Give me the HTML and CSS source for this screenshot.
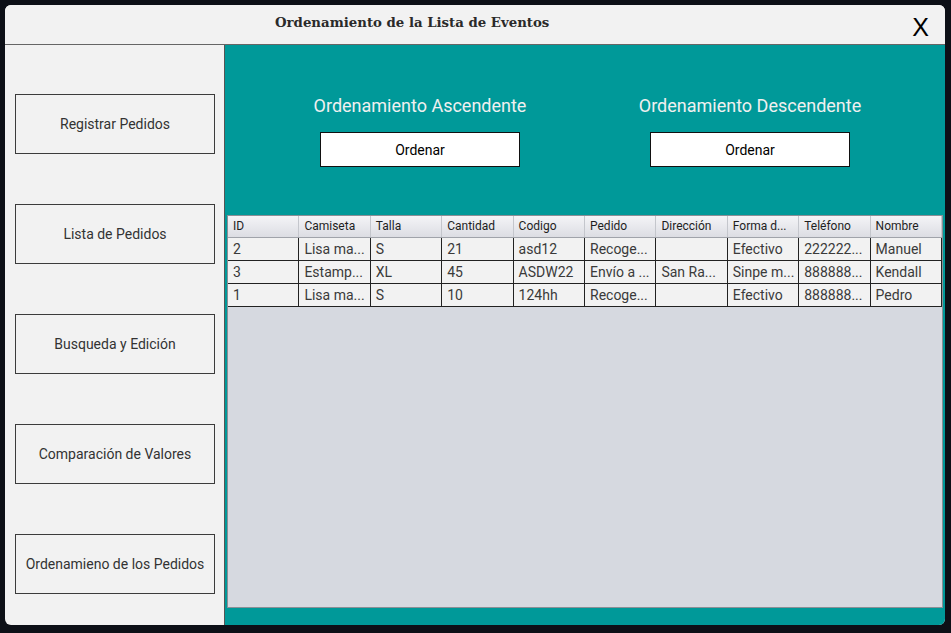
FILE: index.html
```html
<!DOCTYPE html>
<html lang="es">
<head>
<meta charset="utf-8">
<title>Ordenamiento de la Lista de Eventos</title>
<link rel="stylesheet" href="styles.css">
</head>
<body>
<div class="window">
  <div class="titlebar">
    <div class="title">Ordenamiento de la Lista de Eventos</div>
    <div class="close">X</div>
  </div>
  <div class="content">
    <div class="sidebar">
      <div class="navbtn">Registrar Pedidos</div>
      <div class="navbtn">Lista de Pedidos</div>
      <div class="navbtn">Busqueda y Edición</div>
      <div class="navbtn">Comparación de Valores</div>
      <div class="navbtn">Ordenamieno de los Pedidos</div>
    </div>
    <div class="main">
      <div class="sorters">
        <div class="sorter">
          <div class="sorter-title">Ordenamiento Ascendente</div>
          <div class="sorter-btn">Ordenar</div>
        </div>
        <div class="sorter">
          <div class="sorter-title">Ordenamiento Descendente</div>
          <div class="sorter-btn">Ordenar</div>
        </div>
      </div>
      <div class="pane">
        <div class="grid head">
          <div>ID</div><div>Camiseta</div><div>Talla</div><div>Cantidad</div><div>Codigo</div><div>Pedido</div><div>Dirección</div><div>Forma d...</div><div>Teléfono</div><div>Nombre</div>
        </div>
        <div class="grid row">
          <div>2</div><div>Lisa ma...</div><div>S</div><div>21</div><div>asd12</div><div>Recoge...</div><div></div><div>Efectivo</div><div>222222...</div><div>Manuel</div>
        </div>
        <div class="grid row">
          <div>3</div><div>Estamp...</div><div>XL</div><div>45</div><div>ASDW22</div><div>Envío a ...</div><div>San Ra...</div><div>Sinpe m...</div><div>888888...</div><div>Kendall</div>
        </div>
        <div class="grid row">
          <div>1</div><div>Lisa ma...</div><div>S</div><div>10</div><div>124hh</div><div>Recoge...</div><div></div><div>Efectivo</div><div>888888...</div><div>Pedro</div>
        </div>
      </div>
    </div>
  </div>
</div>
</body>
</html>
```
FILE: styles.css
```css
* { box-sizing: border-box; }
html, body { margin: 0; padding: 0; }
body {
  background: #0d1017;
  width: 951px;
  height: 633px;
  overflow: hidden;
  font-family: Roboto, "Liberation Sans", sans-serif;
}
.window {
  margin: 5px 0 0 5px;
  width: 940px;
  height: 620px;
  border-radius: 6px;
  overflow: hidden;
  background: #f2f2f2;
  display: flex;
  flex-direction: column;
}
.titlebar {
  height: 40px;
  flex: none;
  border-bottom: 1px solid #666;
  background: #f2f2f2;
  display: flex;
  align-items: center;
  padding-left: 270px;
  padding-right: 16px;
}
.title {
  font-family: "DejaVu Serif", serif;
  font-weight: bold;
  font-size: 13.3px;
  color: #2a2a2a;
  flex: 1;
  margin-top: -4px;
}
.close {
  font-family: "Liberation Sans", sans-serif;
  font-size: 25px;
  color: #000;
  margin-top: 6px;
}
.content {
  flex: 1;
  display: flex;
}
.sidebar {
  width: 220px;
  flex: none;
  border-right: 1px solid #555;
  padding: 49px 0 0 10px;
  display: flex;
  flex-direction: column;
  gap: 50px;
}
.navbtn {
  width: 200px;
  height: 60px;
  border: 1px solid #3c3c3c;
  display: flex;
  align-items: center;
  justify-content: center;
  font-size: 14px;
  color: #333;
}
.main {
  flex: 1;
  background: #009999;
  padding: 50px 2px 17px 2px;
  display: flex;
  flex-direction: column;
}
.sorters {
  display: flex;
  padding-left: 28px;
  height: 120px;
  flex: none;
}
.sorter {
  width: 330px;
  display: flex;
  flex-direction: column;
  align-items: center;
}
.sorter-title {
  font-size: 18px;
  line-height: 21px;
  color: #f0f0f0;
}
.sorter-btn {
  margin-top: 16px;
  width: 200px;
  height: 35px;
  background: #fff;
  border: 1px solid #111;
  display: flex;
  align-items: center;
  justify-content: center;
  font-size: 14px;
  color: #000;
}
.pane {
  flex: 1;
  border: 1px solid #8a8f96;
  background: #d6d9e0;
}
.grid {
  display: grid;
  grid-template-columns: repeat(10, 1fr);
}
.grid > div {
  padding-left: 5px;
  white-space: nowrap;
  overflow: hidden;
}
.head {
  height: 22px;
  background: linear-gradient(#f4f4f7, #dcdde3);
  border-bottom: 1px solid #a0a3aa;
}
.head > div {
  font-size: 12px;
  line-height: 21px;
  color: #1e1e1e;
  border-right: 1px solid #c4c6cc;
}
.row {
  height: 23px;
  background: #f2f2f2;
  border-bottom: 1px solid #222;
}
.row > div {
  font-size: 14px;
  line-height: 22px;
  color: #3a3a3a;
  border-right: 1px solid #222;
}
```
